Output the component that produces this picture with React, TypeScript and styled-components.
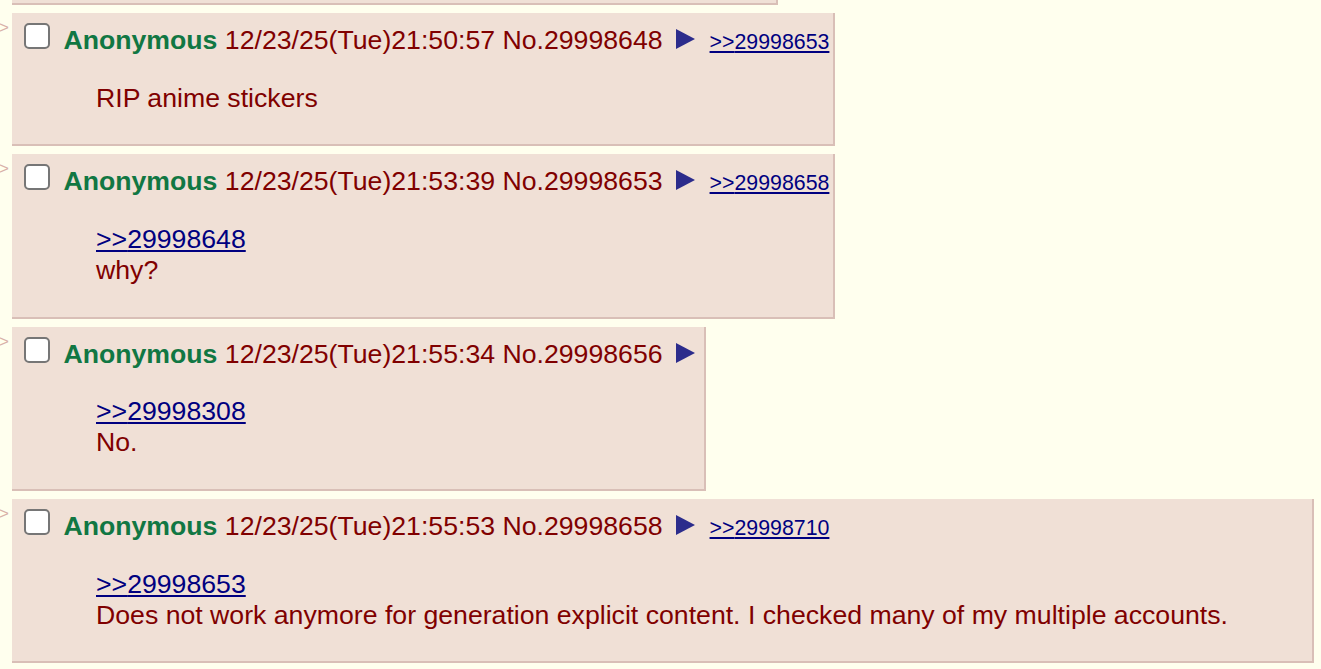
import React from 'react';
import styled, { createGlobalStyle } from 'styled-components';

interface PostData {
    no: string;
    date: string;
    backlinks: string[];
    quote?: string;
    text: string;
}

const posts: PostData[] = [
    { no: '29998648', date: '12/23/25(Tue)21:50:57', backlinks: ['29998653'], text: 'RIP anime stickers' },
    { no: '29998653', date: '12/23/25(Tue)21:53:39', backlinks: ['29998658'], quote: '29998648', text: 'why?' },
    { no: '29998656', date: '12/23/25(Tue)21:55:34', backlinks: [], quote: '29998308', text: 'No.' },
    {
        no: '29998658',
        date: '12/23/25(Tue)21:55:53',
        backlinks: ['29998710'],
        quote: '29998653',
        text: 'Does not work anymore for generation explicit content. I checked many of my multiple accounts.',
    },
];

const GlobalStyle = createGlobalStyle`
    html, body {
        margin: 0;
        padding: 0;
        background: #ffffee;
    }
    body {
        font-family: "Liberation Sans", Arial, sans-serif;
        font-size: 26.67px;
        color: #800000;
        overflow: hidden;
    }
`;

const Thread = styled.div`
    display: flex;
    flex-direction: column;
`;

const ReplyContainer = styled.div`
    display: flex;
    align-items: flex-start;
    margin-bottom: 8px;
`;

const SideArrows = styled.div`
    width: 12px;
    flex-shrink: 0;
    overflow: hidden;
    color: #d8b0a8;
    font-size: 17px;
    line-height: 1;
    padding-top: 6px;
    text-indent: -1px;
`;

// bottom edge of the post scrolled above the viewport
const PostTail = styled.div`
    margin-left: 12px;
    width: 764px;
    height: 3px;
    background: #f0e0d6;
    border-right: 2px solid #d9bfb7;
    border-bottom: 2px solid #d9bfb7;
`;

const Post = styled.div`
    background: #f0e0d6;
    border-right: 2px solid #d9bfb7;
    border-bottom: 2px solid #d9bfb7;
    padding: 4px;
`;

const PostInfo = styled.div`
    white-space: nowrap;
`;

const Checkbox = styled.input.attrs({ type: 'checkbox' })`
    appearance: none;
    display: inline-block;
    vertical-align: baseline;
    box-sizing: border-box;
    width: 26px;
    height: 26px;
    margin: 6px 6px 0 8px;
    border: 2px solid #767676;
    border-radius: 5px;
    background: #ffffff;
`;

const Name = styled.span`
    color: #117743;
    font-weight: bold;
`;

const MenuButton = styled.svg`
    display: inline-block;
    vertical-align: baseline;
    margin: 0 5px 0 13px;
`;

const Backlink = styled.a`
    margin-left: 10px;
    font-size: 0.8em;
    color: #000080;
    text-decoration: underline;
`;

const Message = styled.blockquote`
    margin: 1em 80px;
`;

const QuoteLink = styled.a`
    color: #000080;
    text-decoration: underline;
`;

const Reply = ({ post }: { post: PostData }) => (
    <ReplyContainer>
        <SideArrows>&gt;</SideArrows>
        <Post>
            <PostInfo>
                <Checkbox />{' '}
                <Name>Anonymous</Name> <span>{post.date}</span> <span>No.{post.no}</span>
                <MenuButton width="19" height="20" viewBox="0 0 19 20">
                    <polygon points="0,0 19,10 0,20" fill="#2c2c8c" />
                </MenuButton>
                {post.backlinks.map((b) => (
                    <Backlink key={b}>&gt;&gt;{b}</Backlink>
                ))}
            </PostInfo>
            <Message>
                {post.quote && (
                    <>
                        <QuoteLink>&gt;&gt;{post.quote}</QuoteLink>
                        <br />
                    </>
                )}
                {post.text}
            </Message>
        </Post>
    </ReplyContainer>
);

const App = () => (
    <>
        <GlobalStyle />
        <Thread>
            <ReplyContainer>
                <PostTail />
            </ReplyContainer>
            {posts.map((p) => (
                <Reply key={p.no} post={p} />
            ))}
        </Thread>
    </>
);

export default App;
